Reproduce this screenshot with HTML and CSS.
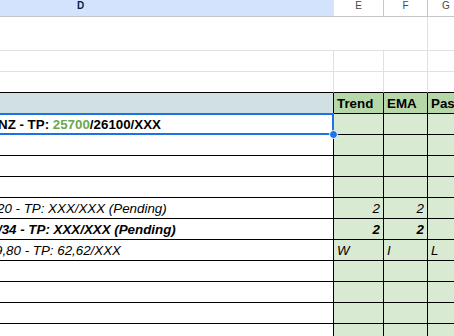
FILE: index.html
```html
<!DOCTYPE html>
<html>
<head>
<meta charset="utf-8">
<link rel="stylesheet" href="styles.css">
</head>
<body>
<div class="sheet">
  <div class="row hdr">
    <div class="c d hsel"><span class="hd-d">D</span></div>
    <div class="c e hc">E</div>
    <div class="c f hc">F</div>
    <div class="c g hc">G</div>
  </div>
  <div class="row r1">
    <div class="c def"></div>
    <div class="c g"></div>
  </div>
  <div class="row lt">
    <div class="c d"></div><div class="c e"></div><div class="c f"></div><div class="c g"></div>
  </div>
  <div class="row lt last">
    <div class="c d"></div><div class="c e"></div><div class="c f"></div><div class="c g"></div>
  </div>
  <div class="row bx th">
    <div class="c d dh"></div>
    <div class="c e gh">Trend</div>
    <div class="c f gh">EMA</div>
    <div class="c g gh">Past</div>
  </div>
  <div class="row bx">
    <div class="c d b"><span class="m2">NZ - TP: <span class="green">25700</span>/26100/XXX</span></div>
    <div class="c e gl"></div><div class="c f gl"></div><div class="c g gl"></div>
  </div>
  <div class="row bx">
    <div class="c d"></div><div class="c e gl"></div><div class="c f gl"></div><div class="c g gl"></div>
  </div>
  <div class="row bx">
    <div class="c d"></div><div class="c e gl"></div><div class="c f gl"></div><div class="c g gl"></div>
  </div>
  <div class="row bx">
    <div class="c d"></div><div class="c e gl"></div><div class="c f gl"></div><div class="c g gl"></div>
  </div>
  <div class="row bx">
    <div class="c d i"><span class="m3">20 - TP: XXX/XXX (Pending)</span></div>
    <div class="c e gl i num">2</div><div class="c f gl i num">2</div><div class="c g gl"></div>
  </div>
  <div class="row bx">
    <div class="c d i b"><span class="m2">/34 - TP: XXX/XXX (Pending)</span></div>
    <div class="c e gl i b num">2</div><div class="c f gl i b num">2</div><div class="c g gl"></div>
  </div>
  <div class="row bx">
    <div class="c d i"><span class="m5">9,80 - TP: 62,62/XXX</span></div>
    <div class="c e gl i">W</div><div class="c f gl i">I</div><div class="c g gl i">L</div>
  </div>
  <div class="row bx">
    <div class="c d"></div><div class="c e gl"></div><div class="c f gl"></div><div class="c g gl"></div>
  </div>
  <div class="row bx">
    <div class="c d"></div><div class="c e gl"></div><div class="c f gl"></div><div class="c g gl"></div>
  </div>
  <div class="row bx">
    <div class="c d"></div><div class="c e gl"></div><div class="c f gl"></div><div class="c g gl"></div>
  </div>
  <div class="row bx">
    <div class="c d"></div><div class="c e gl"></div><div class="c f gl"></div><div class="c g gl"></div>
  </div>
  <div class="selection"></div>
  <div class="handle"></div>
</div>
</body>
</html>
```

FILE: styles.css
```css
html, body {
  margin: 0;
  padding: 0;
  overflow: hidden;
  background: #ffffff;
}

.sheet {
  position: relative;
  width: 488px;
  font-family: "Liberation Sans", Arial, sans-serif;
  font-size: 13.33px;
  color: #000000;
}

.row {
  display: flex;
  height: 21px;
}

.c {
  box-sizing: border-box;
  height: 100%;
  flex: none;
  overflow: hidden;
  white-space: nowrap;
  display: flex;
  align-items: flex-end;
  padding: 0 3px 2px 3px;
}

.d { width: 334px; padding-left: 0; }
.e { width: 50px; }
.f { width: 44px; }
.g { width: 60px; }
.def { width: 428px; }

/* column header row */
.hdr { height: 17px; }
.hdr .c {
  border-bottom: 1px solid #c4c7c5;
  border-right: 1px solid #c4c7c5;
  align-items: flex-start;
  justify-content: center;
  line-height: 12px;
  font-size: 10px;
  padding: 0;
  color: #444746;
}
.hdr .hsel {
  background: #d3e3fd;
  justify-content: flex-start;
  padding-left: 77px;
  border-right: none;
}
.hd-d {
  font-weight: bold;
  color: #041e49;
}
.hdr .g { justify-content: flex-start; padding-left: 14px; }

/* light grid rows */
.r1 { height: 34px; }
.r1 .c, .lt .c {
  border-bottom: 1px solid #e1e1e1;
  border-right: 1px solid #e1e1e1;
}
.r1 .def { border-right: 1px solid #e1e1e1; }
.lt.last .c { border-bottom: 1px solid #000000; }

/* bordered rows */
.bx .c {
  border-bottom: 1px solid #000000;
  border-right: 1px solid #000000;
}

.dh { background: #d0e0e3; }
.gh { background: #b6d7a8; font-weight: bold; }
.gl { background: #d9ead3; }

.b { font-weight: bold; }
.i { font-style: italic; }
.num { justify-content: flex-end; }
.green { color: #6aa84f; }

.m2 { margin-left: -2px; }
.m3 { margin-left: -3px; }
.m5 { margin-left: -5px; }

/* selection overlay */
.selection {
  position: absolute;
  left: -5px;
  top: 113px;
  width: 339px;
  height: 22px;
  box-sizing: border-box;
  border: 2px solid #1a73e8;
  pointer-events: none;
}
.handle {
  position: absolute;
  left: 329px;
  top: 130px;
  width: 7px;
  height: 7px;
  border-radius: 50%;
  background: #1a73e8;
  border: 1px solid #ffffff;
}
```
